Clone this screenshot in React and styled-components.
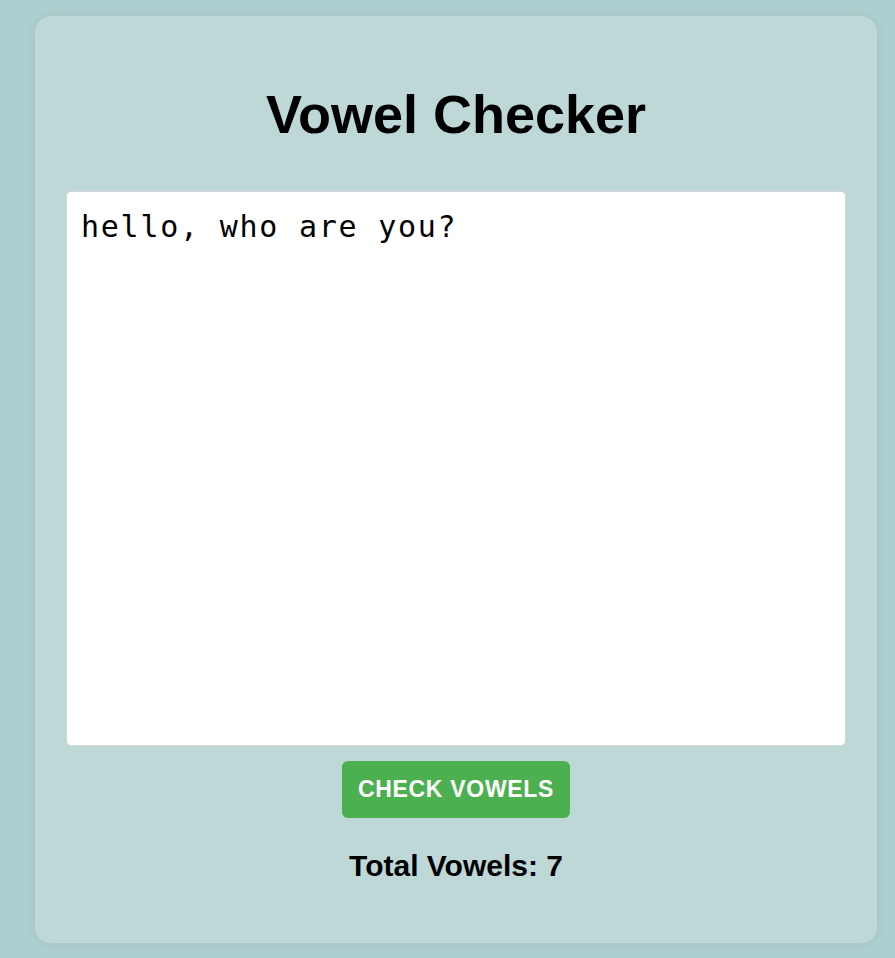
import React, { useState } from "react";
import styled, { createGlobalStyle } from "styled-components";

const Global = createGlobalStyle`
  html, body { margin: 0; padding: 0; background: #aecfcf; }
  body { font-family: "Liberation Sans", Arial, sans-serif; }
  * { box-sizing: border-box; }
`;

const Page = styled.div`
  min-height: 958px;
  padding: 16px 18px 15px 35px;
  display: flex;
`;

const Card = styled.main`
  flex: 1;
  background: #bed8d8;
  border-radius: 16px;
  box-shadow: 0 0 12px rgba(0, 0, 0, 0.06);
  padding: 67px 31px 60px;
  display: flex;
  flex-direction: column;
  align-items: center;
`;

const Title = styled.h1`
  margin: 0 0 46px;
  font-family: "Liberation Sans", Arial, sans-serif;
  font-weight: 700;
  font-size: 54px;
  line-height: 62px;
  color: #000;
`;

const Input = styled.textarea`
  width: 100%;
  height: 555px;
  border: 1px solid #d6d6d6;
  border-radius: 5px;
  background: #fff;
  padding: 18px 14px 16px;
  font-family: "DejaVu Sans Mono", monospace;
  font-size: 30px;
  letter-spacing: 1.75px;
  line-height: 34px;
  color: #000;
  resize: none;
  outline: none;
`;

const Button = styled.button`
  margin-top: 15px;
  height: 57px;
  padding: 0 16px;
  border: none;
  border-radius: 6px;
  background: #4caf50;
  color: #fff;
  font-family: "Liberation Sans", Arial, sans-serif;
  font-weight: 700;
  font-size: 23px;
  letter-spacing: 0.7px;
  cursor: pointer;
`;

const Result = styled.p`
  margin: 31px 0 0;
  font-family: "Liberation Sans", Arial, sans-serif;
  font-weight: 700;
  font-size: 30px;
  line-height: 34px;
  color: #000;
`;

const countVowels = (s) => (s.match(/[aeiou]/gi) || []).length;

export default function App() {
  const [text, setText] = useState("hello, who are you?");
  const [count, setCount] = useState(countVowels("hello, who are you?"));
  return (
    <>
      <Global />
      <Page>
        <Card>
          <Title>Vowel Checker</Title>
          <Input value={text} onChange={(e) => setText(e.target.value)} spellCheck={false} />
          <Button onClick={() => setCount(countVowels(text))}>CHECK VOWELS</Button>
          <Result>Total Vowels: {count}</Result>
        </Card>
      </Page>
    </>
  );
}
